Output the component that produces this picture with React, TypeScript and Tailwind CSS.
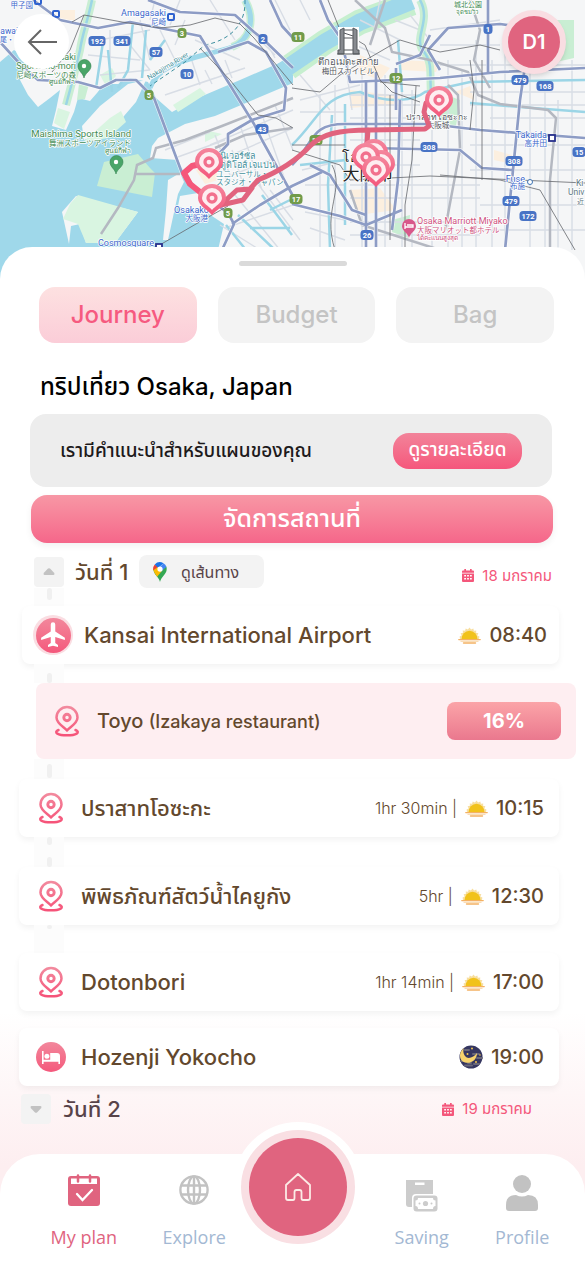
import type { ReactNode } from "react";

const shields: [number, number, string, "blue" | "green"][] = [
  [97, 41, "192", "blue"], [122, 41, "341", "blue"], [156, 52, "57", "blue"], [187, 74, "10", "blue"],
  [263, 39, "2", "blue"], [262, 129, "43", "blue"], [182, 33, "3", "green"], [149, 95, "5", "green"],
  [228, 213, "5", "green"], [298, 37, "11", "green"], [296, 199, "17", "green"], [396, 78, "12", "green"],
  [316, 140, "13", "green"], [488, 29, "1", "blue"], [520, 80, "479", "blue"], [545, 86, "168", "blue"], [429, 147, "308", "blue"],
  [514, 161, "308", "blue"], [511, 201, "479", "blue"], [528, 216, "172", "blue"], [367, 235, "26", "blue"], [579, 152, "15", "blue"],
];

const minorRoads = [
  "M90 42L150 30M88 55L140 60M110 30V80M130 45L150 70M160 30L175 60M100 75L150 70M185 20L175 45M140 20L150 60M195 40L240 60M205 70L212 84M180 90L245 68M190 55L200 85M225 60L232 78M165 95L215 78M265 40L275 58M240 20L275 55M210 0L235 40M275 0L290 30M180 0L170 25M155 0L150 20",
  "M210 145L293 110M220 160L293 128M215 135L230 175M240 125L262 190M262 115L285 180M275 105L293 150M225 178L270 160M235 195L280 250M255 180L300 240M225 228L293 205M220 225L260 250M270 190L293 220M232 150L245 190M165 150L210 132M175 158L225 140",
  "M300 100L360 85M300 112H345M302 170L345 160M305 185H345M305 212L345 220M310 228L345 240M320 95V250M335 85V250M345 60L352 110M355 45L390 60M360 20L400 40M380 0L372 40M300 0L310 20M350 95H420M350 105H420M350 118H420M350 140H420M350 165H420M350 185H480M350 198H480M350 222H480M350 235H480M362 75V250M385 75V250M402 90V250M412 90V250M432 130V250M448 60V250M462 70V250M476 40V250M440 45H500M430 30L500 20M440 65H585M470 92H585M470 105H585M490 118H585M470 145H585M470 170H585M480 205H585M480 230H585M492 60V250M505 30V250M530 70V250M545 80V250M558 100V250M572 60V250M530 15L545 60M410 15L430 40M300 75L330 110M395 20L420 30",
];

const waterLines = [
  "M92 0C88 20 82 35 80 50L74 75L66 105", "M103 42L96 88", "M133 22L128 70L118 88", "M146 30L142 78", "M108 50L112 92M165 40L150 60",
  "M420 0C432 22 412 38 424 52C436 66 426 88 434 104",
  "M292 145C320 118 322 95 360 92C390 105 415 100 425 92L470 82L585 80", "M332 115L328 185L330 250", "M470 103L520 107L585 112", "M345 104V225", "M300 165L346 160", "M398 40L402 92", "M226 225L246 250M238 215L275 250M262 195L292 235M250 228H290M270 210L290 200",
];

const highways = [
  "M33 0L60 20L98 28L130 22L200 36L222 72L254 124L262 140L293 196", "M148 0L180 12L235 15L254 32L263 39L293 68", "M0 42L20 64L38 80L78 82L100 88L116 80L136 80L154 98L182 173L199 192L228 213L234 224L222 250",
  "M218 52L248 42L266 52L286 88L284 110L252 120L228 134L228 144L215 158L200 168", "M232 224L260 205L292 186L322 172", "M270 0L282 26L293 38",
  "M320 0L328 20L342 40L350 82L440 78L500 72L585 68", "M440 70L428 50L448 28L500 24L530 28", "M488 0V72", "M526 60L520 100L514 160L505 250", "M366 80V250M376 72V250M396 68V110M400 100L398 180L392 230", "M292 165C315 142 310 124 345 124L430 124L480 130L585 138", "M370 148L460 150L482 168L512 170", "M292 204L340 216L366 225L402 210M310 165L330 175L352 210L366 215", "M396 64L420 55L430 35",
];

const rails = [
  "M72 22L84 15L122 22L160 28L190 25L215 18L240 24L254 38L293 85", "M84 15L70 50L52 72M158 246L196 224L228 206", "M200 48L230 80L258 115L276 118L293 128",
  "M292 88L320 92L340 75L400 40L440 52L480 45L500 50", "M328 0L340 30L365 45L380 80L392 92L420 102M420 86L380 82M416 86L412 160L405 205L405 250", "M292 150L340 165L350 180L430 176L585 183M345 145L292 145", "M390 95V240M482 60V180M440 175L500 180L540 190L575 250", "M332 165C345 190 322 210 335 250M470 60L474 90L470 130",
];

const pins: [number, number][] = [[209, 162], [212, 198], [439, 100], [374, 153], [381, 164], [366, 157], [376, 170]];

function MapView() {
  const cjk = "Roboto, 'Noto Sans CJK JP', sans-serif";
  return (
    <svg viewBox="0 0 585 280" className="block w-full" role="img" aria-label="Osaka" fontFamily={cjk}>
      <defs>
        <linearGradient id="pin" x1="0" y1="0" x2="0" y2="1">
          <stop offset="0" stopColor="#f4879d" />
          <stop offset="1" stopColor="#f4567b" />
        </linearGradient>
      </defs>
      <rect width="585" height="280" fill="#f5f6f7" />
      <path fill="#9fd8ea" d="M0 62L14 50L30 60L20 80L28 95L38 107L50 98L60 90L56 110L52 126L66 130L74 112L78 98L90 101L97 93L104 84L118 84L130 78L148 82L156 98L172 112L200 97L240 80L293 57V83L253 100L215 116L185 124L158 138L152 146L150 158L178 160L184 172L200 191L204 206L190 214L206 212L224 224L218 250V280H0Z" />
      <g fill="#f5f6f7">
        <path d="M82 126L100 106L128 84L146 80L136 102L112 130L92 137L84 140Z" />
        <path d="M168 180L180 173L184 182L178 194L168 240H163L166 210Z" />
        <path d="M180 196L198 193L204 206L192 212L178 206Z" />
        <path d="M62 212L76 196L138 212L115 243L86 243L80 224L71 226L69 244Z" />
      </g>
      <path fill="#d9f5e1" d="M78 195L138 212L115 243L86 243L78 224L63 219L70 204ZM83 142L110 118L121 111L126 122L108 138ZM58 108L70 112L64 129L54 123ZM205 130L222 134L205 142ZM173 105L200 88L206 94L178 112ZM100 75L112 68L116 76L106 86Z" />
      <path fill="#c9eed3" d="M97 186L104 162L138 154L150 168L155 173L152 197ZM79 84L89 84L85 99L77 100ZM452 97L460 100L456 126L442 128L440 110ZM556 20H574V58L556 62ZM392 220L410 215L408 238L392 232Z" />
      <path fill="#fcefdf" d="M60 10H75V20H60ZM196 170L214 158L218 180L205 184ZM330 20L345 28V38L328 30ZM360 55L390 68L380 80L358 72ZM350 90L400 96V104L350 108ZM350 190L380 188L396 210L358 215ZM400 60L440 62L436 72L400 70ZM494 150L512 155V164L494 160ZM455 92L470 86L474 100Z" />
      <g fill="none">
        <path stroke="#c6efcf" strokeWidth="25" d="M288 68L325 42L360 22L412 3" />
        <path stroke="#9fd8ea" strokeWidth="17" d="M278 74L325 42L360 22L412 1" />
        <g stroke="#d8dde5" strokeWidth="1.4">{minorRoads.map((d) => <path key={d} d={d} />)}</g>
        <path stroke="#c9eed3" strokeWidth="8" d="M92 0C88 20 82 35 80 50L74 75L66 105M245 0C256 20 250 40 232 47M420 0C432 22 412 38 424 52C436 66 426 88 434 104" />
        <g stroke="#9bd5e6" strokeWidth="2.5">{waterLines.map((d) => <path key={d} d={d} />)}</g>
        <path stroke="#9fd8ea" strokeWidth="5" d="M245 0C256 20 250 40 232 47C200 58 160 60 150 88" />
        <path stroke="#3d8f9f" strokeWidth="1" strokeDasharray="4 3" d="M245 0C246 25 230 40 205 45L185 62L150 86" />
        <path stroke="#b4b8c1" strokeWidth="2.5" d="M101 234L118 208L134 180L137 165L153 158L156 148L185 140L222 126L293 98M134 174H180M215 148L245 135L292 128M355 0L385 28L392 52L430 60L468 72L478 95L500 104L548 110L556 118L550 180V250M470 0L480 30L474 60L490 88M385 0L370 45M445 230L460 150L458 95L448 85M350 190L362 225L440 250" />
        <g stroke="#fff" strokeWidth="4" opacity=".7">{highways.map((d) => <path key={d} d={d} />)}</g>
        <g stroke="#8d9cc5" strokeWidth="2.7" strokeLinejoin="round">{highways.map((d) => <path key={d} d={d} />)}</g>
        <g stroke="#65676c" strokeWidth=".8">{rails.map((d) => <path key={d} d={d} />)}</g>
      </g>
      <g fontSize="7.5" fontWeight="700" textAnchor="middle">
        {shields.map(([x, y, label, tone], i) => {
          const w = label.length * 4 + 5;
          return (
            <g key={i}>
              <rect x={x - w / 2} y={y - 5} width={w} height="10" rx="3.5" fill={tone === "blue" ? "#4873c5" : "#719b4a"} />
              <text x={x} y={y + 2.7} fill="#fff">{label}</text>
            </g>
          );
        })}
      </g>
      <g stroke="#fff" strokeWidth="1.5" strokeLinejoin="round" paintOrder="stroke">
        <g fill="#3a66cb" fontSize="9" textAnchor="end">
          <text x="166" y="16">Amagasaki</text><text x="166" y="25" fontSize="7.5">尼崎</text>
          <text x="33" y="8" fontSize="7.5">甲子園</text>
          <text x="18" y="34" fontSize="8.5">awai</text><text x="14" y="42" fontSize="7">尾・</text>
          <text x="209" y="213">Osakako</text><text x="208" y="221" fontSize="7.5">大阪港</text>
          <text x="154" y="246">Cosmosquare</text>
          <text x="547" y="138">Takaida</text><text x="547" y="146" fontSize="7.5">高井田</text>
          <text x="525" y="182">Fuse</text><text x="525" y="189" fontSize="7.5">布施</text>
        </g>
        <g fill="#3f8b53" textAnchor="end">
          <text x="76" y="60" fontSize="9">Amagasaki</text><text x="76" y="69" fontSize="9">Sports-no-mori</text>
          <text x="76" y="78" fontSize="7.5">尼崎スポーツの森</text><text x="75" y="84" fontSize="7">ศูนย์กีฬา</text>
          <text x="131" y="137" fontSize="9.5">Maishima Sports Island</text><text x="131" y="146" fontSize="7.5">舞洲スポーツアイランド</text>
          <text x="131" y="153" fontSize="7">ศูนย์กีฬา</text>
          <text x="482" y="7" fontSize="7">城北公園</text><text x="478" y="14" fontSize="6">จุดชมวิว</text>
        </g>
        <g fill="#46919d" fontSize="9">
          <text x="215" y="159">ยูนิเวอร์ซัล</text><text x="215" y="168">สตูดิโอส์ เจแปน</text>
          <text x="216" y="177" fontSize="7.5">ユニバーサル・</text><text x="216" y="185" fontSize="7.5">スタジオ・ジャパン</text>
          <text transform="translate(149 80) rotate(-31)" fontSize="7">Nakajima River</text>
        </g>
        <g fill="#55585d" textAnchor="middle">
          <text x="348" y="65" fontSize="9.5">ตึกอุเมดะสกาย</text><text x="348" y="74" fontSize="7.5">梅田スカイビル</text>
          <text x="437" y="120" fontSize="8.5">ปราสาทโอซะกะ</text><text x="438" y="128" fontSize="7.5">大阪城</text>
          <text x="367" y="162" fontSize="14" fill="#222">โอซากะ</text><text x="368" y="180" fontSize="17" fill="#222">大阪市</text>
        </g>
        <g fill="#cf5280">
          <text x="417" y="224" fontSize="9">Osaka Marriott Miyako</text><text x="417" y="233" fontSize="7.5">大阪マリオット都ホテル</text><text x="417" y="240" fontSize="6.5">ได้คะแนนสูงสุด</text>
        </g>
        <g fill="#5f7a85"><text x="576" y="186" fontSize="8.5">Ki</text><text x="568" y="195" fontSize="8.5">Univ</text><text x="577" y="204" fontSize="7">近</text></g>
      </g>
      <g fill="none" stroke="#2f62cf" strokeWidth="2"><rect x="35" y="-2" width="6" height="6" rx="1" /><rect x="53" y="11" width="6" height="6" rx="1" /><rect x="168" y="14" width="6" height="6" rx="1" /></g>
      <g fill="#fff" stroke="#27308c" strokeWidth="1.8"><rect x="549" y="135" width="6" height="6" /><rect x="156" y="244" width="6" height="6" /><circle cx="530" cy="182" r="2.5" stroke="#3f75b5" strokeWidth="1" /></g>
      {[[84, 66], [116, 162]].map(([x, y]) => (
        <g key={x} transform={`translate(${x} ${y})`}><path fill="#49a568" stroke="#358352" strokeWidth=".6" d="M0 12C-1 7-6 5-6 0A6.500 6.500 0 1 1 7 0C7 5 1 7 0 12Z" /><circle r="2.200" fill="#fff" /></g>
      ))}
      <path fill="#d8588a" d="M409 238C408 233 402 231 402 226A7 7 0 1 1 416 226C416 231 410 233 409 238Z" />
      <path stroke="#fff" strokeWidth="1.300" fill="none" d="M405 223V229M405 227H413V225H407" />
      <g stroke="#55585d" strokeWidth="1"><path fill="#fff" d="M338 27H359V55H338Z" stroke="none" /><path fill="#888b90" d="M340 30L344 28V54H338V50H340ZM353 28L357 30V50H359V54H353Z" /><path fill="none" d="M344 30H353M344 38H353M337 54H360M344 33L353 36M344 50H353" /></g>
      <g fill="none" stroke="#f5587b" strokeWidth="6" strokeLinecap="round" strokeLinejoin="round">
        <path d="M209 162L192 166L184 173L190 184L200 192" />
        <path stroke="#e1637e" strokeWidth="5" d="M439 102L426 103L424 112L429 126L425 129L370 130C338 130 322 134 310 146C297 160 280 171 258 180L250 189L237 190L226 200L212 207L243 200L252 188M368 130L366 156" />
      </g>
      {pins.map(([x, y]) => (
        <g key={`${x}-${y}`} transform={`translate(${x} ${y})`}>
          <path d="M0 17C-4 12-14 8-14 0A14 14 0 0 1 14 0C14 8 4 12 0 17Z" fill="url(#pin)" />
          <path d="M0 12C-3 8-10 5-10 0A10 10 0 0 1 10 0C10 5 3 8 0 12Z" fill="#feedf0" />
          <circle r="4" fill="none" stroke="#f2708d" strokeWidth="3.300" />
        </g>
      ))}
    </svg>
  );
}

function PlaceIcon() {
  return (
    <svg viewBox="0 0 26 32" className="h-8 w-[26px] shrink-0" fill="none" strokeLinecap="round" strokeLinejoin="round">
      <defs>
        <linearGradient id="place" x1="0" y1="0" x2="0" y2="32" gradientUnits="userSpaceOnUse">
          <stop stopColor="#f28da0" /><stop offset="1" stopColor="#f65077" />
        </linearGradient>
      </defs>
      <g stroke="url(#place)" strokeWidth="2.500">
        <path d="M13 25.500C10 22 2.500 18.500 2.500 12.500A10.500 10.500 0 0 1 23.500 12.500C23.500 18.500 16 22 13 25.500Z" />
        <circle cx="13" cy="12.500" r="3.200" strokeWidth="2.900" />
        <path d="M4.500 25C-1 27.500 4 30.300 13 30.300S27 27.500 21.500 25" />
      </g>
    </svg>
  );
}

function PlaneIcon() {
  return (
    <span className="flex size-10 shrink-0 items-center justify-center rounded-full bg-[#fadde2]">
      <span className="flex size-[35px] items-center justify-center rounded-full bg-linear-to-b from-[#f2879c] to-[#f4587c]">
        <svg viewBox="0 0 24 24" className="size-[30px]" fill="#fff"><path d="M21.500 16v-1.800l-7.700-5V3.600a1.800 1.800 0 0 0-3.600 0v5.600l-7.700 5V16l7.700-2.400v4.800L8 20v1.500l4-1 4 1V20l-2.200-1.600v-4.800z" /></svg>
      </span>
    </span>
  );
}

function BedIcon() {
  return (
    <span className="flex size-[30px] shrink-0 items-center justify-center rounded-full bg-linear-to-b from-[#f2879c] to-[#f4587c]">
      <svg viewBox="0 0 18 13" className="h-[13px] w-[18px]" fill="#fff"><circle cx="4.900" cy="5.200" r="2.500" /><path d="M0 0H1.600V8.700H8.200V2H15Q18 2 18 5V13H16.400V10.700H1.600V13H0Z" /></svg>
    </span>
  );
}

function SunIcon() {
  return (
    <svg viewBox="0 0 23 17" className="h-[17px] w-[23px] shrink-0">
      <path fill="#f8dfa0" d="M2 12L1.600 9.500L3.700 8.500L2.600 6.300L5 5.800L4.700 3.400L7.100 3.700L7.700 1.400L9.900 2.500L11.500.5L13.100 2.500L15.300 1.400L15.900 3.700L18.300 3.400L18 5.800L20.400 6.300L19.300 8.500L21.400 9.500L21 12Z" />
      <path fill="#f1c21b" d="M3.500 12.500A8 8.700 0 0 1 19.500 12.500Z" />
      <path stroke="#f4b163" strokeWidth="1.400" strokeLinecap="round" d="M.8 12.600H22.200M5.500 16H17.500" /><path stroke="#fadcb4" strokeWidth="1.300" d="M2.500 14.300H20.500" />
    </svg>
  );
}

function MoonIcon() {
  return (
    <svg viewBox="0 0 24 24" className="size-6 shrink-0">
      <circle cx="12" cy="12" r="11.500" fill="#353660" />
      <path d="M6 5H10M14 9H20M2 16H7M15 19H20M6 20.500H13M18 13H23M9 18H12" stroke="#696779" strokeWidth="2" strokeLinecap="round" />
      <path fill="#f7d36c" d="M5 3C-1 8 0 16 6 17.500C12 19 18 15 18 8C15 12 9 15 6 11C4 8 4 5 5 3Z" />
      <g fill="#f3c74e"><circle cx="13" cy="3.500" r="1" /><circle cx="8.500" cy="9" r="1" /><circle cx="21" cy="10" r=".8" /><circle cx="17" cy="17" r="1" /></g>
    </svg>
  );
}

function GoogleMapsIcon() {
  return (
    <svg viewBox="0 0 24 34" className="h-5 w-3.5">
      <path fill="#34a853" d="M12 34C10.500 26 1 22 .500 12L12 8L23 8C26 20 14 24 12 34Z" />
      <path fill="#fbbc04" d="M.500 12C1 17 4 21 7 25L18 12L10 7Z" />
      <path fill="#ea4335" d="M3 4A12 12 0 0 0 .500 14L9 8Z" /><path fill="#1a73e8" d="M3 4L9 10L18 2A12 12 0 0 0 3 4Z" />
      <path fill="#4285f4" d="M18 2L9 12L14 16L23 8A11 11 0 0 0 18 2Z" /><circle cx="12" cy="12" r="4.500" fill="#fff" />
    </svg>
  );
}

function DateLabel({ children }: { children: ReactNode }) {
  return (
    <div className="flex items-center gap-2 text-[15px] leading-5 text-[#f4577b]">
      <svg viewBox="0 0 12 13" className="h-[13px] w-3" fill="currentColor"><path fillRule="evenodd" d="M2.300 0H4V1.500H8V0H9.700V1.500H11A1 1 0 0 1 12 2.500V3.800H0V2.500A1 1 0 0 1 1 1.500H2.300ZM0 4.600H12V12A1 1 0 0 1 11 13H1A1 1 0 0 1 0 12ZM2.200 6V7.500H4V6ZM5.100 6V7.500H6.900V6ZM8 6V7.500H9.800V6ZM2.200 9V10.500H4V9ZM5.100 9V10.500H6.900V9ZM8 9V10.500H9.800V9Z" /></svg>
      <span>{children}</span>
    </div>
  );
}

function Toggle({ open }: { open: boolean }) {
  return (
    <button type="button" aria-label={open ? "ย่อ" : "ขยาย"} aria-expanded={open} className="flex size-[30px] shrink-0 items-center justify-center rounded bg-[#f3f3f3]">
      <svg viewBox="0 0 12 8" className={open ? "h-2 w-3" : "h-2 w-3 rotate-180"} fill="#c2c2c2"><path d="M5 .6Q6 0 7 .6L11.300 5Q12 7 10.500 7H1.500Q0 7 .700 5Z" /></svg>
    </button>
  );
}

function Connector({ className, children }: { className: string; children?: ReactNode }) {
  return <div className={`ml-[34px] flex w-[30px] flex-col items-center bg-[#fcfcfc] ${className}`}>{children}</div>;
}

function Dash({ className }: { className: string }) {
  return <i className={`block w-[5px] rounded-full bg-[#f0f0f0] ${className}`} />;
}

function Stop({ icon, name, duration, time, weather, first }: { icon: ReactNode; name: string; duration?: string; time: string; weather: ReactNode; first?: boolean }) {
  return (
    <article className={`mr-[26px] flex h-[58px] items-center rounded-lg bg-white shadow-[0_3px_6px_rgba(0,0,0,0.05)] ${first ? "ml-[22px] pl-[11px] pr-3" : "ml-[19px] pl-4 pr-[15px]"}`}>
      <span className={first ? "flex w-[51px]" : "flex w-[46px] shrink-0"}><span className={first ? "" : "flex w-8 justify-center"}>{icon}</span></span>
      <h3 className="flex-1 whitespace-nowrap text-[22px] font-medium leading-7">{name}</h3>
      {duration && <span className="mr-2 whitespace-nowrap text-[16px] font-light leading-6">{duration} |</span>}
      {weather}
      <time className="ml-2 text-[20px] font-medium leading-7">{time}</time>
    </article>
  );
}

function NavItem({ label, icon, active, className = "" }: { label: string; icon: ReactNode; active?: boolean; className?: string }) {
  return (
    <a href="#" aria-current={active ? "page" : undefined} className={`flex flex-col items-center ${active ? "text-[#e0647f]" : "text-[#a3b8d3]"} ${className}`}>
      <span className="flex h-[42px] items-center justify-center">{icon}</span>
      <span className="mt-[14px] whitespace-nowrap font-['Open_Sans',sans-serif] text-[18px] leading-6">{label}</span>
    </a>
  );
}

export default function App() {
  const tab = "h-14 flex-1 rounded-2xl text-[24px] font-medium leading-8";
  return (
    <div className="relative min-h-screen overflow-hidden bg-white font-[Inter,'Noto_Sans_Thai',sans-serif] text-[#63482d]">
      <header className="relative">
        <MapView />
        <button type="button" aria-label="ย้อนกลับ" className="absolute left-[14px] top-[14px] flex size-[55px] items-center justify-center rounded-full bg-white">
          <svg viewBox="0 0 30 26" className="h-[26px] w-[30px]" fill="none" stroke="#666" strokeWidth="2"><path d="M30 13H2M14 1L2 13L14 25" /></svg>
        </button>
        <button type="button" className="absolute right-[19px] top-[10px] flex size-16 items-center justify-center rounded-full border-[6px] border-[#f9dde2] bg-[#e0647f] text-[20px] font-semibold text-white shadow-md">D1</button>
      </header>

      <main className="relative -mt-[33px] rounded-t-[32px] bg-white bg-linear-to-b from-white from-75% to-[#fdeef0] to-90%">
        <div className="flex justify-center pt-[14px]"><div className="h-[5px] w-[108px] rounded-full bg-[#dadada]" /></div>
        <nav aria-label="แผน" className="ml-[39px] mr-[31px] mt-[21px] flex gap-[21px]">
          <button type="button" className={`${tab} bg-linear-to-b from-[#fde1e1] to-[#fbcdd8] text-[#f65a80]`}>Journey</button>
          <button type="button" className={`${tab} bg-[#f3f3f3] text-[#c4c4c4]`}>Budget</button>
          <button type="button" className={`${tab} bg-[#f3f3f3] text-[#c4c4c4]`}>Bag</button>
        </nav>
        <h1 className="ml-10 mt-[26px] text-[24px] font-medium leading-9 text-black">ทริปเที่ยว Osaka, Japan</h1>
        <section className="ml-[30px] mr-[33px] mt-[9px] flex h-[73px] items-center justify-between rounded-2xl bg-[#ededed] px-[30px]">
          <p className="text-[19px] font-medium leading-7 text-[#1d1a1b]">เรามีคำแนะนำสำหรับแผนของคุณ</p>
          <button type="button" className="h-9 w-[129px] whitespace-nowrap rounded-2xl bg-linear-to-b from-[#f2839a] to-[#f5567c] text-[19px] font-medium text-white">ดูรายละเอียด</button>
        </section>
        <div className="ml-[31px] mr-8 mt-2">
          <button type="button" className="h-12 w-full rounded-2xl bg-linear-to-b from-[#f797a5] to-[#f5668a] text-[25px] font-medium text-white shadow-[0_3px_7px_rgba(0,0,0,0.06)]">จัดการสถานที่</button>
        </div>

        <section>
          <div className="ml-[34px] mr-[33px] mt-3 flex h-[33px] items-center">
            <Toggle open />
            <h2 className="ml-[11px] mr-[10px] w-[54px] whitespace-nowrap text-[22px] font-medium leading-7">วันที่ 1</h2>
            <button type="button" className="flex h-[33px] w-[125px] items-center gap-[14px] rounded-lg bg-[#f3f3f3] px-[14px] text-[16px] text-[#584349]"><GoogleMapsIcon />ดูเส้นทาง</button>
            <div className="ml-auto pt-2"><DateLabel>18 มกราคม</DateLabel></div>
          </div>
          <Connector className="h-[18px]"><Dash className="h-3" /></Connector>
          <Stop first icon={<PlaneIcon />} name="Kansai International Airport" time="08:40" weather={<SunIcon />} />
          <Connector className="h-[19px] justify-end"><Dash className="h-[10px]" /></Connector>
          <article className="ml-9 mr-[9px] flex h-[76px] items-center rounded-lg bg-[#feeef1] pl-[18px] pr-[15px]">
            <PlaceIcon />
            <h3 className="ml-[17px] flex-1 whitespace-nowrap text-[20px] font-medium leading-7">Toyo <small className="text-[18px]">(Izakaya restaurant)</small></h3>
            <button type="button" className="h-[38px] w-[114px] rounded-lg bg-linear-to-b from-[#fba4a8] to-[#ea788e] text-[20px] font-bold text-white">16%</button>
          </article>
          <Connector className="h-5 pt-[5px]"><Dash className="h-[14px]" /></Connector>
          <Stop icon={<PlaceIcon />} name="ปราสาทโอซะกะ" duration="1hr 30min" time="10:15" weather={<SunIcon />} />
          <Connector className="h-[30px] justify-between"><Dash className="h-2" /><Dash className="h-[10px]" /></Connector>
          <Stop icon={<PlaceIcon />} name="พิพิธภัณฑ์สัตว์น้ำไคยูกัง" duration="5hr" time="12:30" weather={<SunIcon />} />
          <Connector className="h-7"><Dash className="h-1" /></Connector>
          <Stop icon={<PlaceIcon />} name="Dotonbori" duration="1hr 14min" time="17:00" weather={<SunIcon />} />
          <div className="mt-[17px]"><Stop icon={<BedIcon />} name="Hozenji Yokocho" time="19:00" weather={<MoonIcon />} /></div>
        </section>
        <section className="ml-[21px] mr-[53px] mt-2 flex h-[30px] items-center">
          <Toggle open={false} />
          <h2 className="ml-3 flex-1 text-[22px] font-medium leading-7 text-[#584349]">วันที่ 2</h2>
          <DateLabel>19 มกราคม</DateLabel>
        </section>

        <div className="mt-[30px]">
          <nav aria-label="เมนูหลัก" className="grid h-[113px] grid-cols-[112fr_110fr_96fr_130fr_92fr] rounded-t-[40px] bg-white pl-7 pr-[17px] pt-[15px]">
            <NavItem active label="My plan" icon={
              <svg viewBox="0 0 32 32" className="size-8"><path fill="#e0647f" d="M3 2H29Q32 2 32 5V29Q32 32 29 32H3Q0 32 0 29V5Q0 2 3 2Z" /><path fill="#fff" d="M3 4.500H29V10H3Z" /><path stroke="#e0647f" strokeWidth="2.500" strokeLinecap="round" d="M10 1.500V7.500M22 1.500V7.500" /><path fill="none" stroke="#fff" strokeWidth="2.300" strokeLinecap="round" d="M9 20L14.500 26L24 16" /></svg>
            } />
            <NavItem label="Explore" icon={
              <svg viewBox="0 0 30 30" className="size-[30px]" fill="none" stroke="#c2c2c2" strokeWidth="2.400"><circle cx="15" cy="15" r="13.600" /><ellipse cx="15" cy="15" rx="6" ry="13.600" /><path d="M3 10.500H27M3 19.500H27M15 1V29" /></svg>
            } />
            <div className="flex justify-center">
              <a href="#" aria-label="หน้าหลัก" className="-mt-[31px] flex size-[98px] shrink-0 items-center justify-center rounded-full bg-[#e0647f] shadow-[0_0_0_8px_#f9dfe3,0_0_0_16px_#fff]">
                <svg viewBox="0 0 26 28" className="h-7 w-[26px]" fill="none" stroke="#fcebe6" strokeWidth="1.800" strokeLinejoin="round"><path d="M1 12L13 1L25 12V25Q25 27 23 27H18Q16.500 27 16.500 25V19Q16.500 17 14.500 17H11.500Q9.500 17 9.500 19V25Q9.500 27 8 27H3Q1 27 1 25Z" /></svg>
              </a>
            </div>
            <NavItem className="pl-5" label="Saving" icon={
              <svg viewBox="0 0 32 32" className="mt-3 size-8"><path fill="#ccc" fillRule="evenodd" d="M0 0H27V14H10Q6 14 6 18V27H3Q0 27 0 24ZM9 2.500V5H18.500V2.500Z" /><rect x="7.500" y="15.500" width="24" height="16" rx="3" fill="#ccc" /><path fill="#fff" d="M12 18H27Q27 20.500 29.500 20.500V26Q27 26 27 29H12Q12 26 9.500 26V20.500Q12 20.500 12 18Z" /><circle cx="19.500" cy="23.500" r="2.600" fill="#ccc" /><circle cx="13.500" cy="23.500" r="1" fill="#ccc" /><circle cx="25.500" cy="23.500" r="1" fill="#ccc" /></svg>
            } />
            <NavItem label="Profile" icon={
              <svg viewBox="0 0 32 36" className="mt-[6px] h-9 w-8" fill="#c2c2c2"><circle cx="16" cy="9" r="9" /><path d="M3 36Q0 36 0 33V30Q0 20 10 20Q16 23 22 20Q32 20 32 30V33Q32 36 29 36Z" /></svg>
            } />
          </nav>
        </div>
      </main>
    </div>
  );
}
